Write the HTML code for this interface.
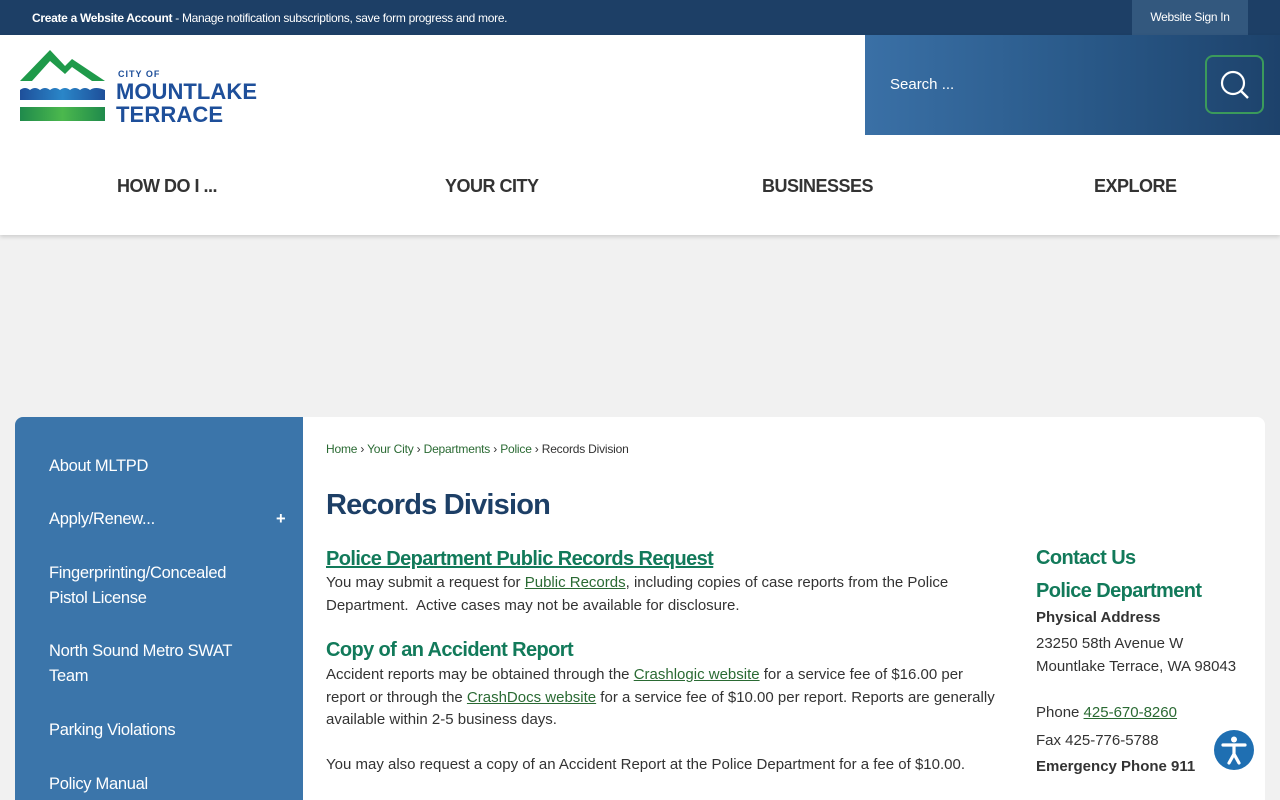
<!DOCTYPE html>
<html><head><meta charset="utf-8"><style>
*{margin:0;padding:0;box-sizing:border-box}
html,body{width:1280px;height:800px;overflow:hidden}
body{background:#f1f1f1;font-family:"Liberation Sans",Arial,sans-serif;color:#333;position:relative}
.top{height:35px;background:#1d3f66;position:relative;color:#fff;font-size:12px}
.top .l{position:absolute;left:32px;top:11px;letter-spacing:-0.3px}
.top .r{position:absolute;left:1132px;top:0;width:116px;height:35px;background:#33587e;text-align:center;line-height:35px;letter-spacing:-0.3px}
.hdr{height:200px;background:#fff;position:relative;box-shadow:0 2px 4px rgba(0,0,0,.15)}
.search{position:absolute;left:865px;top:0;width:415px;height:100px;background:linear-gradient(90deg,#3a70a6,#2a5a8a 50%,#1d426b)}
.search span{position:absolute;left:25px;top:41px;color:#fff;font-size:15px}
.sbtn{position:absolute;left:340px;top:20px;width:59px;height:59px;border:2px solid #3b9a5b;border-radius:8px}
.nav a{position:absolute;top:141px;font-weight:bold;font-size:18px;color:#333;text-decoration:none;letter-spacing:-0.5px}
.side{position:absolute;left:15px;top:417px;width:288px;height:383px;background:#3b75aa;border-radius:8px 0 0 0;color:#fff;font-size:16.5px;letter-spacing:-0.3px}
.side div{position:absolute;left:34px;line-height:25px}
.main{position:absolute;left:303px;top:417px;width:962px;height:383px;background:#fff;border-radius:0 8px 0 0}
.bc{position:absolute;left:23px;top:25px;font-size:12px;color:#333;letter-spacing:-0.2px}
.bc a{color:#2a6a33;text-decoration:none}
h1{position:absolute;left:23px;top:72px;font-size:29px;color:#1d3f66;letter-spacing:-0.8px}
.p{position:absolute;left:23px;width:678px;font-size:15px;line-height:22.5px;color:#333}
.p a,.c a{color:#2a6a33;text-decoration:underline}
.c{position:absolute;left:733px;font-size:15px;color:#333}
.g{color:#127a5a;font-weight:bold;letter-spacing:-0.6px}
</style></head><body>
<div class="top"><span class="l"><b>Create a Website Account</b> - Manage notification subscriptions, save form progress and more.</span><span class="r">Website Sign In</span></div>
<div class="hdr">
<svg style="position:absolute;left:20px;top:14px" width="240" height="76" viewBox="0 0 240 76">
<defs><linearGradient id="gg" x1="0" x2="1"><stop offset="0" stop-color="#1f8a4c"/><stop offset=".5" stop-color="#4bb84d"/><stop offset="1" stop-color="#1f8a4c"/></linearGradient>
<linearGradient id="bb" x1="0" x2="1"><stop offset="0" stop-color="#1e4f9a"/><stop offset=".5" stop-color="#2a86c8"/><stop offset="1" stop-color="#1e4f9a"/></linearGradient></defs>
<path d="M0 32 L30 1 L45 17 L52 10 L85 32 L72 32 L52 18 L45 25 L30 12 L12 32Z" fill="#1f9a4a"/>
<path d="M0 41 q5-4 10 0 q5-4 10 0 q5-4 10 0 q5-4 10 0 q5-4 10 0 q5-4 10 0 q5-4 10 0 q5-4 15 0 V51 H0Z" fill="url(#bb)"/>
<rect x="0" y="58" width="85" height="14" fill="url(#gg)"/>
<text x="98" y="28" font-family="Liberation Sans" font-weight="bold" font-size="9" fill="#1e4f9a" letter-spacing="1">CITY OF</text>
<text x="96" y="50" font-family="Liberation Sans" font-weight="bold" font-size="22" fill="#1e4f9a" letter-spacing="-1" textLength="140">MOUNTLAKE</text>
<text x="96" y="73" font-family="Liberation Sans" font-weight="bold" font-size="22" fill="#1e4f9a" letter-spacing="-1" textLength="106">TERRACE</text>
</svg>
<div class="search"><span>Search ...</span><div class="sbtn"><svg width="55" height="55" viewBox="0 0 55 55"><circle cx="26" cy="26" r="11" fill="none" stroke="#fff" stroke-width="2.2"/><path d="M34 34 L41 41" stroke="#fff" stroke-width="2.4"/></svg></div></div>
<div class="nav"><a style="left:117px">HOW DO I ...</a><a style="left:445px">YOUR CITY</a><a style="left:762px">BUSINESSES</a><a style="left:1094px">EXPLORE</a></div>
</div>
<div class="side">
<div style="top:37px">About MLTPD</div>
<div style="top:90px">Apply/Renew...</div>
<div style="top:90px;left:261px;font-weight:bold">+</div>
<div style="top:144px">Fingerprinting/Concealed<br>Pistol License</div>
<div style="top:222px">North Sound Metro SWAT<br>Team</div>
<div style="top:301px">Parking Violations</div>
<div style="top:355px">Policy Manual</div>
</div>
<div class="main">
<div class="bc"><a>Home</a> › <a>Your City</a> › <a>Departments</a> › <a>Police</a> › Records Division</div>
<h1>Records Division</h1>
<div class="p g" style="top:131px;font-size:20px"><u>Police Department Public Records Request</u></div>
<div class="p" style="top:155px">You may submit a request for <a>Public Records</a>, including copies of case reports from the Police Department.&nbsp; Active cases may not be available for disclosure.</div>
<div class="p g" style="top:222px;font-size:20px">Copy of an Accident Report</div>
<div class="p" style="top:247px">Accident reports may be obtained through the <a>Crashlogic website</a> for a service fee of $16.00 per report or through the <a>CrashDocs website</a> for a service fee of $10.00 per report. Reports are generally available within 2-5 business days.</div>
<div class="p" style="top:337px">You may also request a copy of an Accident Report at the Police Department for a fee of $10.00.</div>
<div class="c g" style="top:130px;font-size:20px">Contact Us</div>
<div class="c g" style="top:163px;font-size:20px">Police Department</div>
<div class="c" style="top:192px;font-weight:bold">Physical Address</div>
<div class="c" style="top:215px;line-height:23px">23250 58th Avenue W<br>Mountlake Terrace, WA 98043</div>
<div class="c" style="top:287px">Phone <a>425-670-8260</a></div>
<div class="c" style="top:315px">Fax 425-776-5788</div>
<div class="c" style="top:341px;font-weight:bold">Emergency Phone 911</div>
</div>
<svg style="position:absolute;left:1214px;top:730px" width="40" height="40" viewBox="0 0 40 40"><circle cx="20" cy="20" r="20" fill="#1f6fb2"/><circle cx="20" cy="9.5" r="3" fill="#fff"/><path d="M9 15 L31 15 M20 15 V24 M20 24 L15 33 M20 24 L25 33" stroke="#fff" stroke-width="3.2" stroke-linecap="round" fill="none"/></svg>
</body></html>
